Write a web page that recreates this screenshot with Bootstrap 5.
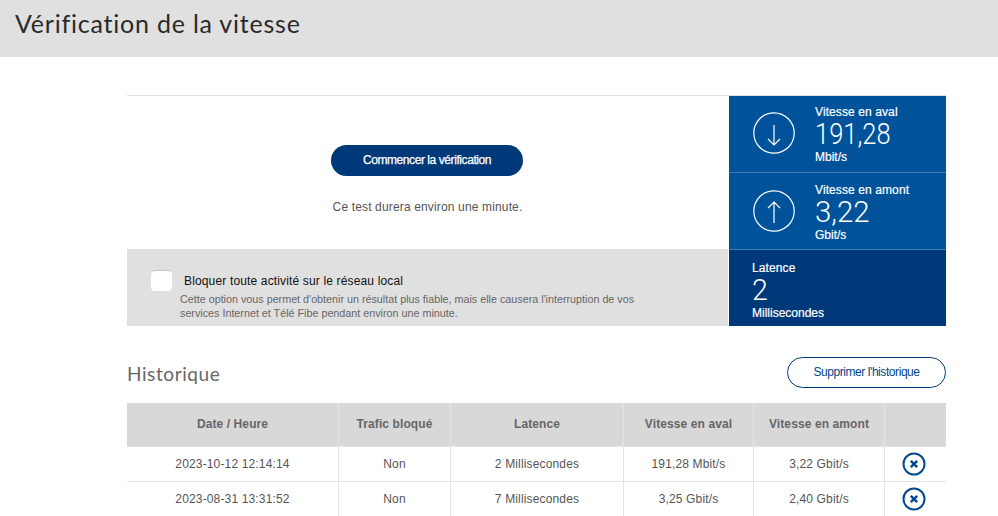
<!DOCTYPE html>
<html lang="fr">
<head>
<meta charset="utf-8">
<title>Vérification de la vitesse</title>
<link href="https://cdn.jsdelivr.net/npm/bootstrap@5.3.0/dist/css/bootstrap.min.css" rel="stylesheet">
<style>
html,body{height:516px;overflow:hidden;background:#fff}
body{font-family:"Liberation Sans",Arial,sans-serif;font-size:12px;color:#555}
.page-head{height:57px;background:#e0e0e0;padding:7px 0 0 15px}
.page-head h1{font-family:Lato,sans-serif;font-size:25px;line-height:33px;font-weight:400;letter-spacing:.78px;color:#2a2a2a;margin:0}
.main-wrap{margin:38px 52px 0 127px;width:819px}
.speed-top{border-top:1px solid #e0e0e0;height:231px}
.left-pane{width:601px}
.start-area{height:153px;padding-top:49px}
.start-btn{width:192px;height:31px;margin-right:1px;border-radius:16px;background:#00397a;color:#fff;font-size:12px;line-height:31px;padding:0;border:0;letter-spacing:-.42px;-webkit-text-stroke:.25px #fff}
.start-btn:hover{background:#00397a;color:#fff}
.start-note{margin:22px 0 0;font-size:12px;line-height:18px;letter-spacing:.15px;color:#555}
.block-area{height:77px;background:#e0e0e0;padding:21px 0 0 24px}
.fake-check{width:21px;height:21px;background:#fff;border-radius:4px;border-top:1px solid #c8c8c8;flex:none;margin-right:12px}
.block-label{font-size:12px;line-height:24px;letter-spacing:.15px;color:#111;margin-top:-1px}
.block-help{margin:-1px 0 0 29px;font-size:10.75px;line-height:14px;color:#666;width:470px}
.right-pane{width:217px;margin-left:1px;color:#fff}
.metric{height:77px;padding-top:9px;background:#00539b;border-bottom:1px solid #3f7cb4;display:flex;align-items:flex-start}
.metric+.metric{padding-top:10px}
.metric.metric-dark{background:#00397a;height:76px;border:0;padding:11px 0 0 23px}
.metric-icon{width:42px;height:42px;margin:7px 20px 0 24px;flex:none}
.metric-name{font-size:12px;line-height:14px;letter-spacing:.1px;-webkit-text-stroke:.2px #fff}
.metric-val{font-size:30px;line-height:30px;font-family:Roboto,"Liberation Sans",sans-serif;font-weight:300;transform:scaleX(.85);transform-origin:left center}
.metric+.metric .metric-val{transform:scaleX(.98)}
.metric.metric-dark .metric-val{transform:scaleX(.95)}
.metric-unit{font-size:12px;line-height:16px;-webkit-text-stroke:.2px #fff}
.hist-head{height:77px;padding-top:31px}
.hist-title{font-family:Lato,sans-serif;font-size:19px;line-height:34px;letter-spacing:.6px;color:#666;margin:0;font-weight:400}
.clear-btn{width:159px;height:31px;border:1px solid #00397a;border-radius:16px;background:#fff;color:#00468c;font-size:12px;line-height:27px;padding:0;letter-spacing:-.43px}
.clear-btn:hover{background:#fff;color:#00468c}
.hist-table{width:819px;table-layout:fixed;border-collapse:separate;border-spacing:0;margin:0}
.hist-table th{height:43px;background:#d8d8d8;color:#666;font-size:12px;font-weight:700;letter-spacing:.1px;text-align:center;vertical-align:middle;border-right:1px solid #e4e4e4;padding:0 0 1px}
.hist-table td{height:35px;background:#fff;color:#555;font-size:12px;letter-spacing:.15px;text-align:center;vertical-align:middle;border-right:1px solid #e4e4e4;border-top:1px solid #e4e4e4;padding:0}
.hist-table tr>:last-child{border-right:0}
.x-icon{width:24px;height:24px;display:block;margin:0 auto 0 17px}
</style>
</head>
<body>
<header class="page-head"><h1>Vérification de la vitesse</h1></header>
<main class="main-wrap">
  <section class="speed-top d-flex">
    <div class="left-pane">
      <div class="start-area text-center">
        <button type="button" class="btn start-btn">Commencer la vérification</button>
        <p class="start-note">Ce test durera environ une minute.</p>
      </div>
      <div class="block-area">
        <div class="d-flex align-items-start">
          <span class="fake-check"></span>
          <span class="block-label">Bloquer toute activité sur le réseau local</span>
        </div>
        <p class="block-help">Cette option vous permet d'obtenir un résultat plus fiable, mais elle causera l'interruption de vos services Internet et Télé Fibe pendant environ une minute.</p>
      </div>
    </div>
    <div class="right-pane">
      <div class="metric">
        <svg class="metric-icon" viewBox="0 0 42 42" fill="none" stroke="#fff" stroke-width="1.2"><circle cx="21" cy="21" r="20.2"/><path d="M21 13v20M15 27l6 6 6-6"/></svg>
        <div><div class="metric-name">Vitesse en aval</div><div class="metric-val">191,28</div><div class="metric-unit">Mbit/s</div></div>
      </div>
      <div class="metric">
        <svg class="metric-icon" viewBox="0 0 42 42" fill="none" stroke="#fff" stroke-width="1.2"><circle cx="21" cy="21" r="20.2"/><path d="M21 33V12M15 18l6-6 6 6"/></svg>
        <div><div class="metric-name">Vitesse en amont</div><div class="metric-val">3,22</div><div class="metric-unit">Gbit/s</div></div>
      </div>
      <div class="metric metric-dark">
        <div><div class="metric-name">Latence</div><div class="metric-val">2</div><div class="metric-unit">Millisecondes</div></div>
      </div>
    </div>
  </section>
  <section class="hist-head d-flex justify-content-between align-items-start">
    <h2 class="hist-title">Historique</h2>
    <button type="button" class="btn clear-btn">Supprimer l'historique</button>
  </section>
  <table class="hist-table">
    <colgroup><col style="width:212px"><col style="width:112px"><col style="width:173px"><col style="width:130px"><col style="width:131px"><col style="width:61px"></colgroup>
    <thead><tr><th>Date / Heure</th><th>Trafic bloqué</th><th>Latence</th><th>Vitesse en aval</th><th>Vitesse en amont</th><th></th></tr></thead>
    <tbody>
      <tr><td>2023-10-12 12:14:14</td><td>Non</td><td>2 Millisecondes</td><td>191,28 Mbit/s</td><td>3,22 Gbit/s</td><td><svg class="x-icon" viewBox="0 0 24 24" fill="none" stroke="#004a8f"><circle cx="12" cy="12" r="10.500" stroke-width="2"/><path d="M8.800 8.800l6.400 6.400M15.200 8.800l-6.400 6.400" stroke-width="2.400"/></svg></td></tr>
      <tr><td>2023-08-31 13:31:52</td><td>Non</td><td>7 Millisecondes</td><td>3,25 Gbit/s</td><td>2,40 Gbit/s</td><td><svg class="x-icon" viewBox="0 0 24 24" fill="none" stroke="#004a8f"><circle cx="12" cy="12" r="10.500" stroke-width="2"/><path d="M8.800 8.800l6.400 6.400M15.200 8.800l-6.400 6.400" stroke-width="2.400"/></svg></td></tr>
    </tbody>
  </table>
</main>
<script src="https://cdn.jsdelivr.net/npm/bootstrap@5.3.0/dist/js/bootstrap.bundle.min.js"></script>
</body>
</html>
